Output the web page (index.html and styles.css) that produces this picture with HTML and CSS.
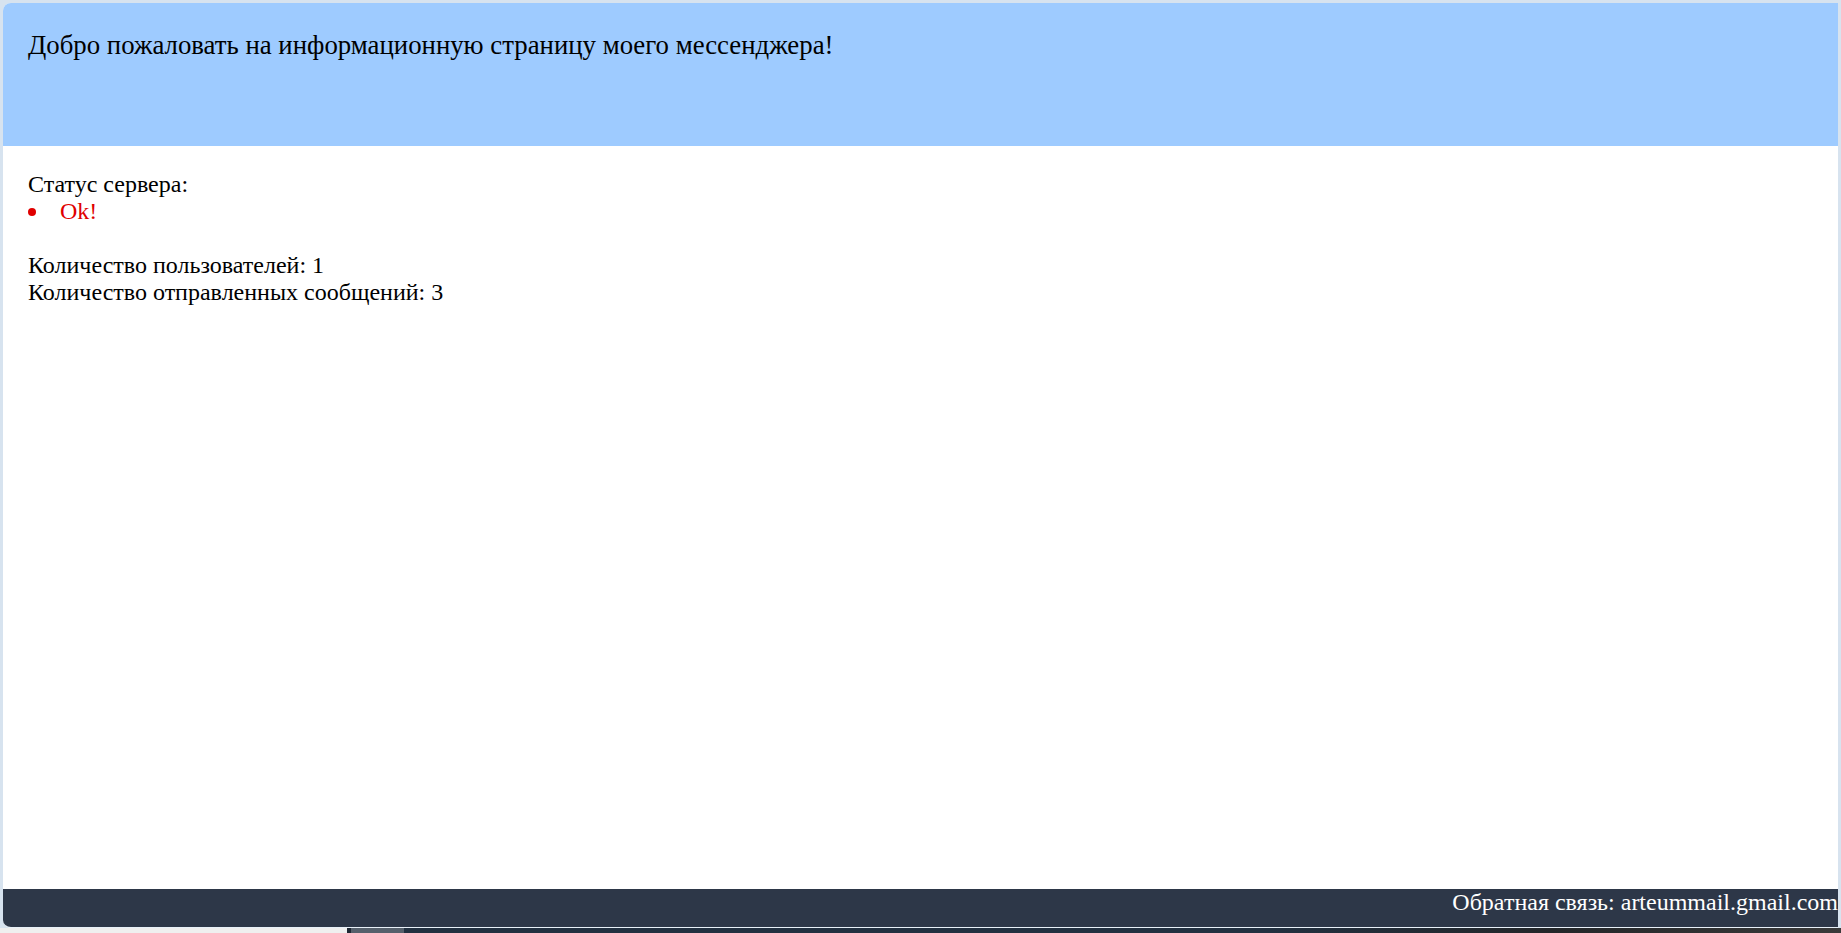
FILE: index.html
```html
<!DOCTYPE html>
<html lang="ru">
<head>
<meta charset="utf-8">
<title>Мессенджер</title>
<link rel="stylesheet" href="styles.css">
</head>
<body>
<div class="window">
  <header class="header">
    <div class="header-title">Добро пожаловать на информационную страницу моего мессенджера!</div>
  </header>
  <main class="main">
    <div class="line">Статус сервера:</div>
    <ul class="status-list">
      <li class="status-ok">Ok!</li>
    </ul>
    <div class="spacer"></div>
    <div class="line">Количество пользователей: 1</div>
    <div class="line">Количество отправленных сообщений: 3</div>
  </main>
  <footer class="footer">Обратная связь: arteummail.gmail.com</footer>
</div>
<div class="strip">
  <div class="strip-light"></div>
  <div class="strip-dark"></div>
  <div class="strip-grey"></div>
  <div class="strip-navy"></div>
</div>
</body>
</html>
```

FILE: styles.css
```css
html, body {
  margin: 0;
  padding: 0;
}
body {
  width: 1841px;
  height: 933px;
  background: #d7e3ef;
  display: flex;
  flex-direction: column;
  padding: 3px 3px 0 3px;
  box-sizing: border-box;
  font-family: "Liberation Serif", "Times New Roman", serif;
  font-size: 24px;
  line-height: 27px;
  color: #000;
  overflow: hidden;
}
.window {
  flex: 1;
  display: flex;
  flex-direction: column;
  background: #fff;
  border-radius: 8px 0 0 8px;
  overflow: hidden;
  border-bottom: 1px solid #e8f0f8;
}
.header {
  height: 143px;
  box-sizing: border-box;
  background: #9ecbff;
  padding: 27px 25px 0 25px;
}
.header-title {
  font-size: 26.8px;
  line-height: 30px;
}
.main {
  flex: 1;
  padding: 25px 25px 0 25px;
}
.status-list {
  margin: 0;
  padding: 0;
  list-style: none;
}
.status-ok {
  display: flex;
  align-items: center;
  color: #e00000;
}
.status-ok::before {
  content: "";
  width: 8px;
  height: 8px;
  border-radius: 50%;
  background: #e00000;
  margin-right: 24px;
  margin-top: 1px;
}
.spacer {
  height: 27px;
}
.footer {
  height: 38px;
  background: #2d3748;
  color: #fff;
  text-align: right;
  padding: 0;
  line-height: 26px;
}
.strip {
  height: 5px;
  display: flex;
  margin: 0 -3px;
}
.strip-light {
  width: 347px;
  background: #efefef;
}
.strip-dark {
  width: 4px;
  background: #1e2733;
}
.strip-grey {
  width: 53px;
  background: #56606c;
}
.strip-navy {
  flex: 1;
  background: linear-gradient(to right, #223040 0%, #223040 60%, #232629 80%, #3a3a3a 100%);
}
```
